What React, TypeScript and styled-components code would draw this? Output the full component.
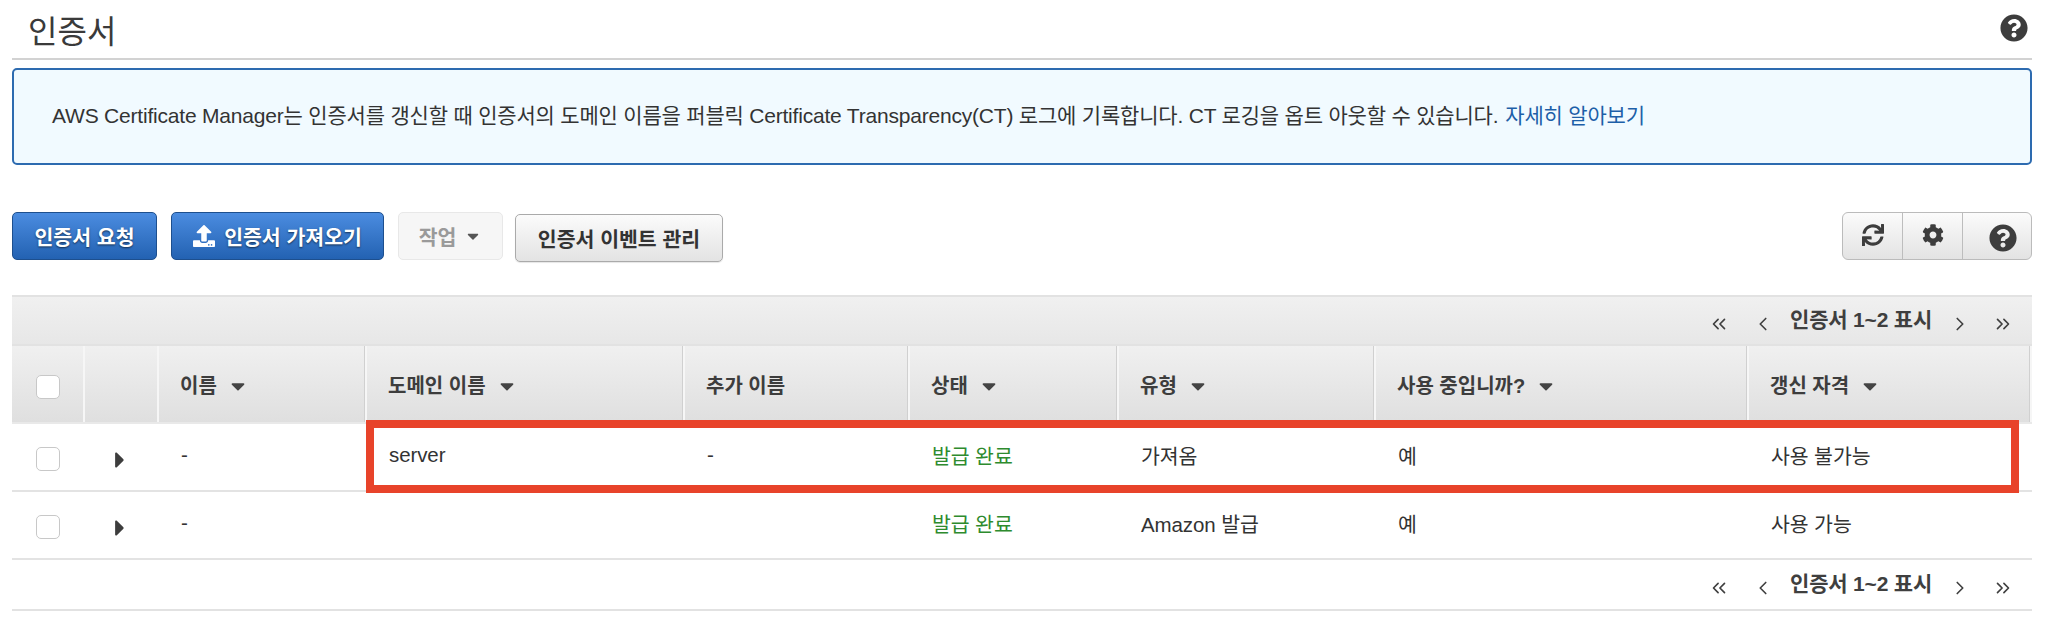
import React from "react";
import styled, { createGlobalStyle } from "styled-components";
import { FaCog, FaQuestionCircle, FaSync, FaUpload, FaCaretDown, FaCaretRight } from "react-icons/fa";
import { ChevronLeft, ChevronRight, ChevronsLeft, ChevronsRight } from "lucide-react";

const FONT = `"Liberation Sans", "Noto Sans CJK KR", sans-serif`;

const Global = createGlobalStyle`
  html, body { margin: 0; padding: 0; background: #fff; }
  body { font-family: ${FONT}; color: #333; }
  * { box-sizing: border-box; }
`;

const Page = styled.div`
  position: relative;
  width: 2048px;
  height: 623px;
  padding: 0 16px 0 12px;
  overflow: hidden;
`;

const TitleBar = styled.div`
  height: 60px;
  border-bottom: 2px solid #d2d2d2;
  display: flex;
  align-items: flex-start;
  justify-content: space-between;
  padding: 14px 4px 0 16px;
`;

const Title = styled.h1`
  margin: -2px 0 0;
  font-size: 32px;
  line-height: 40px;
  font-weight: 400;
  color: #3a3a3a;
`;

const HelpIcon = styled(FaQuestionCircle)<{ $size: number }>`
  width: ${(p) => p.$size}px;
  height: ${(p) => p.$size}px;
  color: #3d3d3d;
  display: block;
`;

const Notice = styled.div`
  margin-top: 8px;
  height: 97px;
  border: 2px solid #2d6bb0;
  border-radius: 5px;
  background: #f1faff;
  padding: 0 0 5px 38px;
  display: flex;
  align-items: center;
  font-size: 21px;
  color: #333;
  letter-spacing: -0.2px;
`;

const NoticeLink = styled.a`
  color: #1d5fa8;
  margin-left: 7px;
`;

const Toolbar = styled.div`
  margin-top: 47px;
  height: 83px;
  display: flex;
  align-items: flex-start;
`;

const Btn = styled.button<{ $w: number; $mt?: number; $ml?: number }>`
  width: ${(p) => p.$w}px;
  margin-top: ${(p) => p.$mt ?? 0}px;
  margin-left: ${(p) => p.$ml ?? 0}px;
  height: 48px;
  border-radius: 5px;
  font-family: ${FONT};
  font-size: 20.5px;
  font-weight: 700;
  display: flex;
  align-items: center;
  justify-content: center;
  gap: 9px;
  padding: 0;
`;

const PrimaryBtn = styled(Btn)`
  color: #fff;
  background: linear-gradient(#4b8ce0, #2362b2);
  border: 1px solid #1d4f8e;
  text-shadow: 0 1px 2px rgba(0, 0, 0, 0.6);
`;

const DisabledBtn = styled(Btn)`
  color: #9a9a9a;
  font-weight: 700;
  background: #f6f6f6;
  border: 1px solid #e8e8e8;
  gap: 8px;
`;

const DefaultBtn = styled(Btn)`
  color: #333;
  background: linear-gradient(#fbfbfb, #e3e3e3);
  border: 1px solid #aaa;
  box-shadow: 0 1px 1px rgba(0, 0, 0, 0.1);
`;

const BtnGroup = styled.div`
  margin-left: auto;
  width: 190px;
  height: 48px;
  display: grid;
  grid-template-columns: 60px 60px 70px;
  border: 1px solid #bbb;
  border-radius: 6px;
  overflow: hidden;
  background: linear-gradient(#fbfbfb, #e3e3e3);
`;

const GroupCell = styled.div<{ $last?: boolean }>`
  display: flex;
  align-items: center;
  justify-content: center;
  color: #3d3d3d;
  border-right: ${(p) => (p.$last ? "none" : "1px solid #bdbdbd")};
  font-size: 22px;
  padding-bottom: 3px;
`;

const GroupHelp = styled(GroupCell)`
  padding: 4px 0 0 10px;
`;

const Pager = styled.div<{ $bar?: boolean }>`
  height: 51px;
  display: flex;
  align-items: center;
  justify-content: flex-end;
  padding: 0 18px 0 0;
  background: ${(p) => (p.$bar ? "linear-gradient(#f0f0f0, #e7e7e7)" : "transparent")};
  border-top: ${(p) => (p.$bar ? "2px solid #e2e2e2" : "none")};
  border-bottom: 2px solid #e2e2e2;
  color: #3f3f3f;
`;

const PagerLabel = styled.span`
  font-size: 21px;
  font-weight: 700;
  letter-spacing: -0.2px;
  margin: -5px 17px 0 16px;
`;

const PagerIcon = styled.span<{ $gap?: number }>`
  display: flex;
  margin-left: ${(p) => p.$gap ?? 0}px;
  margin-top: 6px;
`;

const Row = styled.div<{ $head?: boolean }>`
  display: grid;
  grid-template-columns: 73px 74px 208px 318px 225px 209px 257px 373px 283px;
  height: ${(p) => (p.$head ? 78 : 68)}px;
  align-items: center;
  background: ${(p) => (p.$head ? "linear-gradient(#f0f0f0, #dfdfdf)" : "#fff")};
  border-bottom: 2px solid ${(p) => (p.$head ? "#e9e9e9" : "#e3e3e3")};
`;

const HeadCell = styled.div`
  height: 100%;
  display: flex;
  align-items: center;
  gap: 10px;
  padding: 0 0 0 21px;
  font-size: 20px;
  font-weight: 700;
  color: #3d3d3d;
  border-right: 2px solid #f6f6f6;
  box-shadow: inset -1px 0 0 #d0d0d0;
`;

const BoxCell = styled.div<{ $head?: boolean }>`
  height: 100%;
  display: flex;
  align-items: center;
  padding-left: 24px;
  padding-top: ${(p) => (p.$head ? 6 : 4)}px;
  border-right: ${(p) => (p.$head ? "2px solid #f6f6f6" : "none")};
`;

const Check = styled.span`
  width: 24px;
  height: 24px;
  background: #fff;
  border: 1px solid #c8c8c8;
  border-radius: 5px;
  display: block;
`;

const Arrow = styled(FaCaretRight)`
  width: 26px;
  height: 26px;
  color: #3d3d3d;
  margin: 2px 0 0 -2px;
  display: block;
`;

const Sort = styled(FaCaretDown)`
  width: 22px;
  height: 22px;
  color: #444;
  display: block;
  margin-top: 4px;
`;

const Cell = styled.div<{ $ok?: boolean }>`
  padding: 0 0 5px 22px;
  font-size: 20.5px;
  letter-spacing: -0.1px;
  color: ${(p) => (p.$ok ? "#2e8b2e" : "#333")};
`;

const Highlight = styled.div`
  position: absolute;
  left: 366px;
  top: 420px;
  width: 1653px;
  height: 73px;
  border: 8px solid #e8432a;
  pointer-events: none;
`;

const heads: [string, boolean][] = [
  ["이름", true],
  ["도메인 이름", true],
  ["추가 이름", false],
  ["상태", true],
  ["유형", true],
  ["사용 중입니까?", true],
  ["갱신 자격", true],
];

const rows = [
  ["-", "server", "-", "발급 완료", "가져옴", "예", "사용 불가능"],
  ["-", "", "", "발급 완료", "Amazon 발급", "예", "사용 가능"],
];

const Pagination = ({ bar }: { bar?: boolean }) => (
  <Pager $bar={bar}>
    <PagerIcon><ChevronsLeft size={22} strokeWidth={1.8} /></PagerIcon>
    <PagerIcon $gap={22}><ChevronLeft size={22} strokeWidth={1.8} /></PagerIcon>
    <PagerLabel>인증서 1~2 표시</PagerLabel>
    <PagerIcon><ChevronRight size={22} strokeWidth={1.8} /></PagerIcon>
    <PagerIcon $gap={21}><ChevronsRight size={22} strokeWidth={1.8} /></PagerIcon>
  </Pager>
);

export default function App() {
  return (
    <Page>
      <Global />
      <TitleBar>
        <Title>인증서</Title>
        <HelpIcon $size={28} />
      </TitleBar>
      <Notice>
        AWS Certificate Manager는 인증서를 갱신할 때 인증서의 도메인 이름을 퍼블릭 Certificate Transparency(CT) 로그에 기록합니다. CT 로깅을 옵트 아웃할 수 있습니다.
        <NoticeLink>자세히 알아보기</NoticeLink>
      </Notice>
      <Toolbar>
        <PrimaryBtn $w={145}>인증서 요청</PrimaryBtn>
        <PrimaryBtn $w={213} $ml={14}><FaUpload size={22} />인증서 가져오기</PrimaryBtn>
        <DisabledBtn $w={105} $ml={14}>작업<FaCaretDown size={18} color="#555" /></DisabledBtn>
        <DefaultBtn $w={208} $ml={12} $mt={2}>인증서 이벤트 관리</DefaultBtn>
        <BtnGroup>
          <GroupCell><FaSync /></GroupCell>
          <GroupCell><FaCog /></GroupCell>
          <GroupHelp $last><HelpIcon $size={28} /></GroupHelp>
        </BtnGroup>
      </Toolbar>
      <Pagination bar />
      <Row $head>
        <BoxCell $head><Check /></BoxCell>
        <BoxCell $head />
        {heads.map(([label, sort]) => (
          <HeadCell key={label}>
            {label}
            {sort && <Sort />}
          </HeadCell>
        ))}
      </Row>
      {rows.map((r, i) => (
        <Row key={i}>
          <BoxCell><Check /></BoxCell>
          <BoxCell><Arrow /></BoxCell>
          {r.map((c, j) => (
            <Cell key={j} $ok={j === 3}>{c}</Cell>
          ))}
        </Row>
      ))}
      <Pagination />
      <Highlight />
    </Page>
  );
}
